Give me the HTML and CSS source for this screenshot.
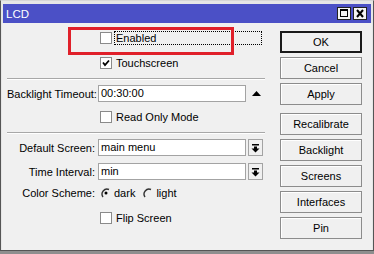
FILE: index.html
```html
<!DOCTYPE html>
<html lang="en">
<head>
    <meta charset="UTF-8">
    <title>LCD</title>
    <link rel="stylesheet" href="styles.css">
</head>
<body>
    <div class="win">
        <div class="titlebar">
            <span class="title">LCD</span>
            <div class="tb-btns">
                <span class="tb-btn">
                    <svg width="12" height="11" viewBox="0 0 12 11"><rect x="2.5" y="1.5" width="7" height="7" fill="none" stroke="#000"/><rect x="2" y="1" width="8" height="2" fill="#000"/></svg>
                </span>
                <span class="tb-btn">
                    <svg width="12" height="11" viewBox="0 0 12 11"><path d="M3 2 L9 9 M9 2 L3 9" stroke="#000" stroke-width="2"/></svg>
                </span>
            </div>
        </div>

        <div class="content">
            <div class="form">
                <div class="row h14">
                    <span class="lbl"></span>
                    <span class="check"></span>
                    <span class="clabel focus">Enabled</span>
                </div>
                <div class="row h14 mt11">
                    <span class="lbl"></span>
                    <span class="check">
                        <svg width="10" height="10" viewBox="0 0 10 10"><path d="M2 4.5 L4 7 L8 2.5" fill="none" stroke="#000" stroke-width="1.8"/></svg>
                    </span>
                    <span class="clabel">Touchscreen</span>
                </div>

                <div class="sep"></div>

                <div class="row h17 mt5">
                    <span class="lbl">Backlight Timeout:</span>
                    <span class="input">00:30:00</span>
                    <span class="arrow">
                        <svg width="11" height="7" viewBox="0 0 11 7"><polygon points="5.5,1 10,6 1,6" fill="#000"/></svg>
                    </span>
                </div>
                <div class="row h14 mt8">
                    <span class="lbl"></span>
                    <span class="check"></span>
                    <span class="clabel">Read Only Mode</span>
                </div>

                <div class="sep"></div>

                <div class="row h17 mt5">
                    <span class="lbl">Default Screen:</span>
                    <span class="input">main menu</span>
                    <span class="drop">
                        <svg width="9" height="10" viewBox="0 0 9 10"><rect x="1" y="1" width="7" height="1.5" fill="#000"/><rect x="3" y="3.5" width="3" height="2.5" fill="#000"/><polygon points="0.5,5.5 8.5,5.5 4.5,9.5" fill="#000"/></svg>
                    </span>
                </div>
                <div class="row h17 mt7">
                    <span class="lbl">Time Interval:</span>
                    <span class="input">min</span>
                    <span class="drop">
                        <svg width="9" height="10" viewBox="0 0 9 10"><rect x="1" y="1" width="7" height="1.5" fill="#000"/><rect x="3" y="3.5" width="3" height="2.5" fill="#000"/><polygon points="0.5,5.5 8.5,5.5 4.5,9.5" fill="#000"/></svg>
                    </span>
                </div>
                <div class="row h14 mt6">
                    <span class="lbl">Color Scheme:</span>
                    <span class="radio">
                        <svg width="12" height="12" viewBox="0 0 12 12"><path d="M9 2.5 A5 5 0 0 0 3 10" fill="none" stroke="#333" stroke-width="1.4"/><circle cx="6" cy="6" r="1.5" fill="#000"/></svg>
                    </span>
                    <span class="rlabel">dark</span>
                    <span class="radio r2">
                        <svg width="12" height="12" viewBox="0 0 12 12"><path d="M9 2.5 A5 5 0 0 0 3 10" fill="none" stroke="#333" stroke-width="1.4"/></svg>
                    </span>
                    <span class="rlabel">light</span>
                </div>
                <div class="row h14 mt11">
                    <span class="lbl"></span>
                    <span class="check"></span>
                    <span class="clabel">Flip Screen</span>
                </div>
            </div>

            <div class="buttons">
                <button class="btn default">OK</button>
                <button class="btn">Cancel</button>
                <button class="btn">Apply</button>
                <button class="btn gap">Recalibrate</button>
                <button class="btn">Backlight</button>
                <button class="btn">Screens</button>
                <button class="btn">Interfaces</button>
                <button class="btn">Pin</button>
            </div>
        </div>

        <!-- highlight drawn over the dialog -->
        <div class="mark"></div>
    </div>
</body>
</html>
```

FILE: styles.css
```css
body {
    margin: 0;
    background-color: #8e8e8e;
    font-family: "Liberation Sans", Arial, sans-serif;
    font-size: 11px;
    color: #000;
}

.win {
    position: relative;
    width: 368px;
    padding: 3px 2px 0 2px;
    background-color: #e6e6e6;
    border: 1px solid #555;
    border-top-color: #d6d6d6;
}

.titlebar {
    height: 19px;
    background-color: #4b50c6;
    display: flex;
    align-items: center;
    justify-content: space-between;
    padding: 0 4px 0 3px;
}

.title {
    color: #fff;
    font-size: 11.5px;
}

.tb-btns {
    display: flex;
    gap: 2px;
}

.tb-btn {
    width: 12px;
    height: 11px;
    border: 1px solid #222;
    background-color: #f4f4f4;
    display: flex;
}

.content {
    height: 227px;
    background-color: #f0f0f0;
    display: flex;
    padding: 8px 0 0 5px;
    box-sizing: border-box;
    margin: 0 -1px;
}

.form {
    width: 258px;
}

.row {
    display: flex;
    align-items: center;
}

.h14 { height: 14px; }
.h17 { height: 17px; }
.mt5 { margin-top: 5px; }
.mt6 { margin-top: 6px; }
.mt7 { margin-top: 7px; }
.mt8 { margin-top: 8px; }
.mt11 { margin-top: 11px; }

.lbl {
    width: 88px;
    margin-right: 3px;
    text-align: right;
    white-space: nowrap;
}

.check {
    width: 10px;
    height: 10px;
    margin-left: 2px;
    border: 1px solid #8a8a8a;
    background-color: #fff;
    display: flex;
}

.clabel {
    margin-left: 4px;
    padding-left: 0;
    line-height: 12px;
}

.focus {
    width: 145px;
    margin-left: 3px;
    padding-left: 1px;
    outline: 1px dotted #000;
}

.sep {
    margin-top: 8px;
    height: 0;
    border-top: 1px solid #a8a8a8;
    border-bottom: 1px solid #fff;
}

.input {
    width: 144px;
    height: 15px;
    line-height: 15px;
    padding-left: 2px;
    background-color: #fff;
    border: 1px solid #a3a3a3;
}

.arrow {
    width: 15px;
    margin-left: 3px;
    display: flex;
    justify-content: center;
}

.drop {
    width: 13px;
    height: 15px;
    margin-left: 2px;
    border: 1px solid #a3a3a3;
    background-color: #f0f0f0;
    display: flex;
    align-items: center;
    justify-content: center;
}

.radio {
    width: 12px;
    height: 12px;
    margin-left: 2px;
    display: flex;
}

.radio.r2 {
    margin-left: 7px;
}

.rlabel {
    margin-left: 2px;
}

.buttons {
    margin-left: 15px;
    width: 82px;
    display: flex;
    flex-direction: column;
    gap: 4px;
}

.btn {
    height: 22px;
    padding: 0;
    font-family: "Liberation Sans", Arial, sans-serif;
    font-size: 11px;
    color: #000;
    background-color: #f0f0f0;
    border: 1px solid #8c8c8c;
    box-shadow: inset 1px 1px 0 #fff;
}

.btn.default {
    border: 2px solid #1a1a1a;
    box-shadow: none;
}

.btn.gap {
    margin-top: 4px;
}

.mark {
    position: absolute;
    left: 67px;
    top: 26px;
    width: 160px;
    height: 22px;
    border: 3px solid #e0202a;
}
```
